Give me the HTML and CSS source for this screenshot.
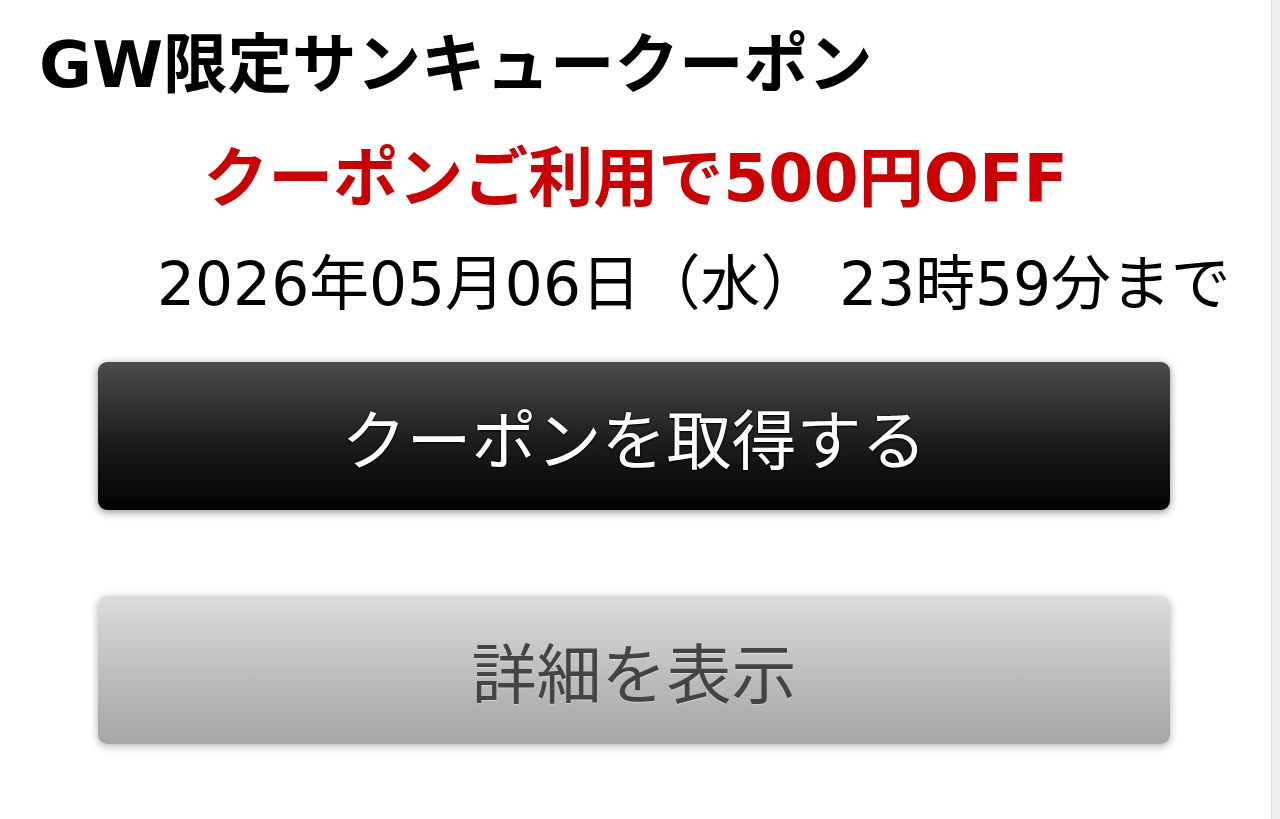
FILE: index.html
```html
<!DOCTYPE html>
<html lang="ja">
<head>
<meta charset="utf-8">
<title>GW限定サンキュークーポン</title>
<link rel="stylesheet" href="styles.css">
</head>
<body>
<div class="page">
  <main class="content">
    <h1 class="title">GW限定サンキュークーポン</h1>
    <p class="offer">クーポンご利用で500円OFF</p>
    <p class="deadline">2026年05月06日（水） 23時59分まで</p>
    <div class="btn btn-get">クーポンを取得する</div>
    <div class="btn btn-detail">詳細を表示</div>
  </main>
  <div class="scrollbar"></div>
</div>
</body>
</html>
```

FILE: styles.css
```css
html, body {
  margin: 0;
  padding: 0;
  background: #ffffff;
}

body {
  font-family: "DejaVu Sans", "Noto Sans CJK JP", sans-serif;
  color: #000000;
}

.page {
  display: flex;
  width: 1280px;
  height: 819px;
  overflow: hidden;
}

.content {
  flex: 1;
  display: flex;
  flex-direction: column;
}

.scrollbar {
  width: 8px;
  background: #eeeeee;
  border-left: 1px solid #dedede;
}

.title {
  margin: 25px 0 0 39px;
  font-size: 64.5px;
  line-height: 80px;
  font-weight: bold;
  white-space: nowrap;
}

.offer {
  margin: 34px 0 0 0;
  text-align: center;
  color: #cc0000;
  font-size: 65px;
  line-height: 80px;
  font-weight: bold;
  white-space: nowrap;
}

.deadline {
  margin: 25px 0 0 157px;
  font-size: 59.8px;
  line-height: 80px;
  white-space: nowrap;
}

.btn {
  margin-left: 98px;
  width: 1072px;
  height: 148px;
  border-radius: 9px;
  display: flex;
  align-items: center;
  justify-content: center;
  font-size: 65px;
  white-space: nowrap;
}

.btn-get {
  margin-top: 38px;
  background: linear-gradient(#4c4c4c, #1c1c1c 55%, #020202);
  box-shadow: 0 2px 8px rgba(0, 0, 0, 0.45);
  color: #ffffff;
  text-shadow: 0 0 2px #000, 0 1px 2px #000;
}

.btn-detail {
  margin-top: 86px;
  background: linear-gradient(#dcdcdc, #bcbcbc 55%, #a6a6a6);
  box-shadow: 0 2px 8px rgba(0, 0, 0, 0.3);
  color: #444444;
  text-shadow: 0 1px 1px rgba(255, 255, 255, 0.4);
}
```
